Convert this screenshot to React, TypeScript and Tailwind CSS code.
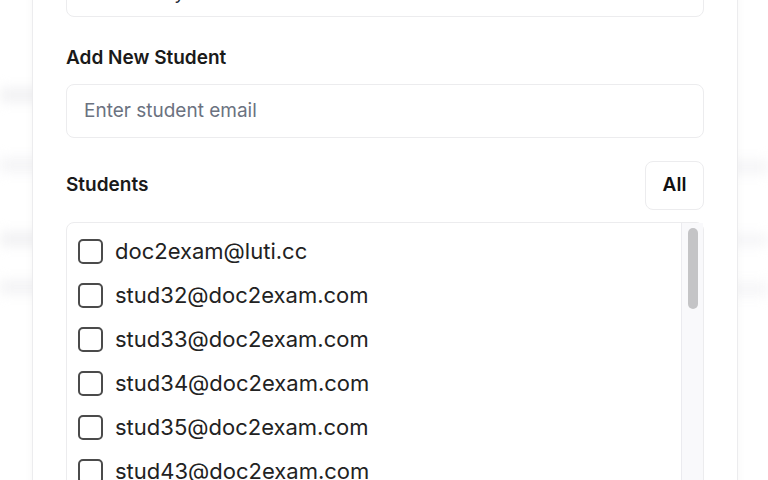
import React from "react";

const students = [
  "doc2exam@luti.cc",
  "stud32@doc2exam.com",
  "stud33@doc2exam.com",
  "stud34@doc2exam.com",
  "stud35@doc2exam.com",
  "stud43@doc2exam.com",
];

export default function App() {
  return (
    <div
      className="relative w-[768px] h-[480px] overflow-hidden bg-white"
      style={{ fontFamily: "Inter, 'Noto Sans', sans-serif" }}
    >
      {/* blurred background content behind the dialog */}
      <div className="absolute inset-0 blur-[6px]">
        <div className="absolute left-0 top-[88px] w-[60px] h-[14px] bg-[#f1f1f3]" />
        <div className="absolute left-0 top-[158px] w-[60px] h-[14px] bg-[#f4f4f6]" />
        <div className="absolute left-0 top-[232px] w-[60px] h-[14px] bg-[#f1f1f3]" />
        <div className="absolute left-0 top-[280px] w-[60px] h-[14px] bg-[#f3f3f5]" />
        <div className="absolute right-0 top-[160px] w-[40px] h-[14px] bg-[#f5f5f7]" />
        <div className="absolute right-0 top-[234px] w-[40px] h-[12px] bg-[#f5f5f7]" />
        <div className="absolute right-0 top-[282px] w-[40px] h-[14px] bg-[#f6f6f8]" />
      </div>

      <div className="relative ml-[32px] w-[706px] -mt-[60px] h-[600px] bg-white border border-[#ececee] rounded-xl shadow-[0_0_8px_rgba(0,0,0,0.04)] px-[33px] pt-[22px]">
        <div className="h-[54px] rounded-lg border border-[#ececee] flex items-center px-[17px] overflow-hidden">
          <span className="translate-y-[3px] ml-[9px] text-[19px] text-[#1f2937]">Chemistry</span>
        </div>

        <div className="mt-[29px] text-[19px] font-semibold text-[#1a1a1a] leading-[24px]">
          Add New Student
        </div>
        <div className="mt-[14px] h-[54px] rounded-lg border border-[#ececee] flex items-center px-[17px]">
          <span className="text-[19px] text-[#6b7280]">Enter student email</span>
        </div>

        <div className="mt-[23px] flex items-center justify-between">
          <span className="text-[19px] font-semibold text-[#1a1a1a]">Students</span>
          <button className="w-[59px] h-[49px] rounded-lg border border-[#ececee] bg-white text-[19px] font-semibold text-[#111]">
            All
          </button>
        </div>

        <div className="mt-[12px] h-[300px] rounded-lg border border-[#ececee] flex">
          <div className="flex-1 pt-[6px] pl-[11px]">
            {students.map((s) => (
              <div key={s} className="h-[44px] flex items-center gap-[12px]">
                <div className="w-[25px] h-[25px] rounded-[5px] border-2 border-[#4b4b4b] bg-white shrink-0" />
                <span className="text-[22px] text-[#222]">{s}</span>
              </div>
            ))}
          </div>
          <div className="w-[22px] border-l border-[#ebebef] bg-[#f9f9fb] pt-[5px] flex justify-center">
            <div className="w-[10px] h-[81px] rounded-full bg-[#c4c4c6]" />
          </div>
        </div>
      </div>
    </div>
  );
}
